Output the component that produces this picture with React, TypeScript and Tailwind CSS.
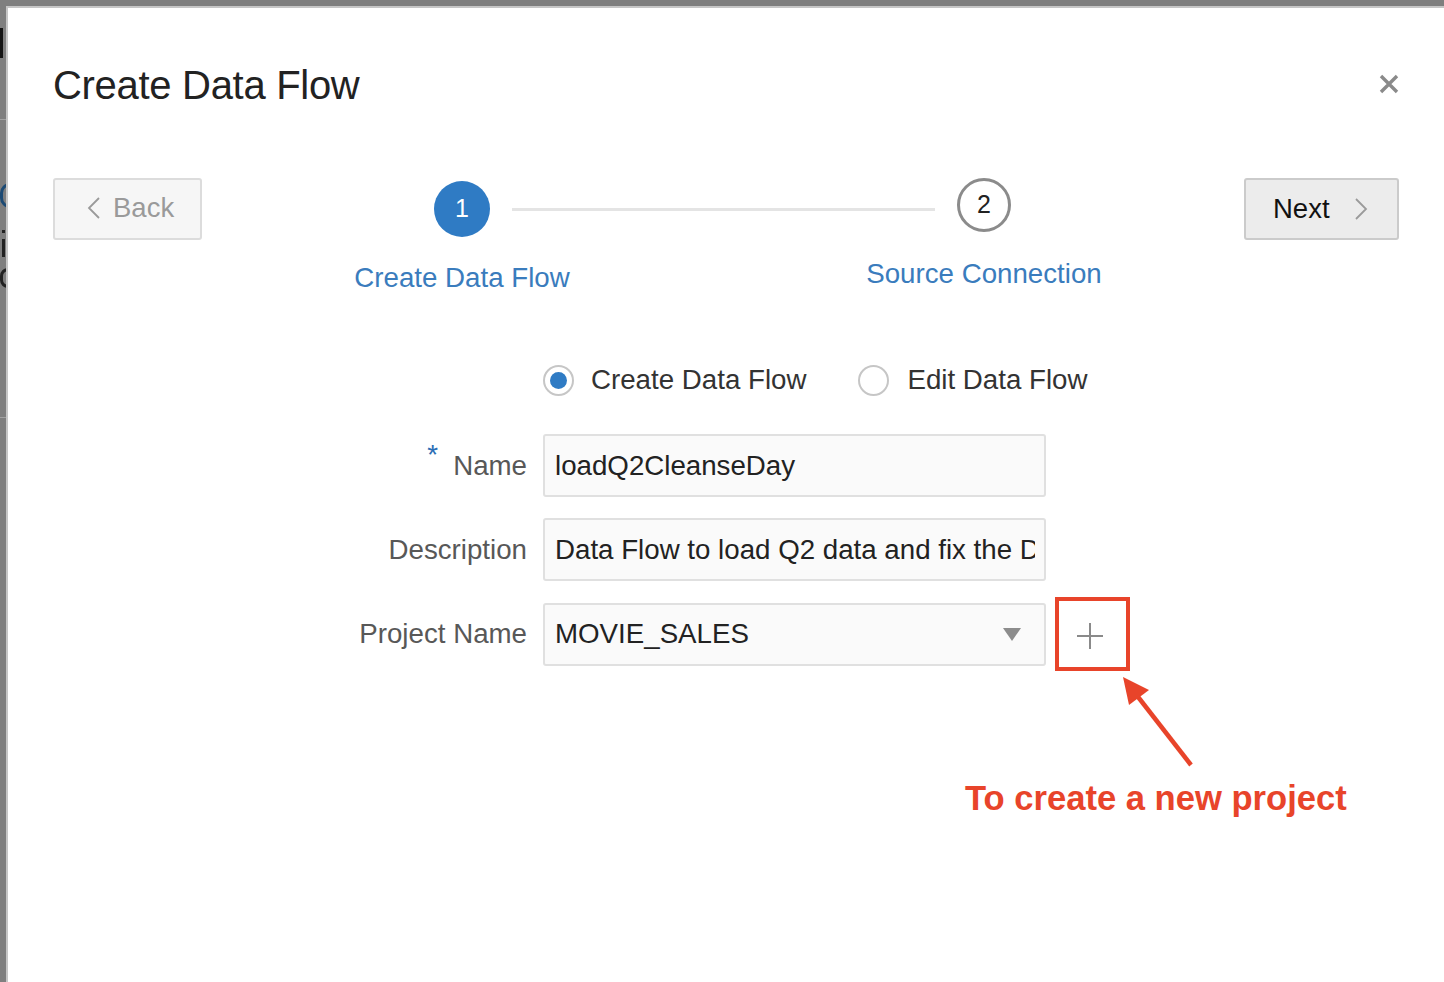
import React from "react";

const FONT = "font-['Liberation_Sans',Arial,Helvetica,sans-serif]";

function ChevronLeft() {
  return (
    <svg width="14" height="22" viewBox="0 0 14 22" fill="none">
      <path d="M12 1 L2 11 L12 21" stroke="#9a9a9a" strokeWidth="1.8" />
    </svg>
  );
}

function ChevronRight() {
  return (
    <svg width="14" height="22" viewBox="0 0 14 22" fill="none">
      <path d="M2 1 L12 11 L2 21" stroke="#9a9a9a" strokeWidth="1.8" />
    </svg>
  );
}

function CloseIcon() {
  return (
    <svg width="20" height="20" viewBox="0 0 20 20" fill="none">
      <path d="M2 2 L18 18 M18 2 L2 18" stroke="#8a8a8a" strokeWidth="3.4" />
    </svg>
  );
}

function Backdrop() {
  // the page behind the dialog, only a sliver of it shows
  return (
    <div className="flex w-[6px] shrink-0 flex-col overflow-hidden">
      <div className="mt-[22px] h-[30px] w-[3px] shrink-0 bg-[#141414]" />
      <div className="mt-[61px] h-px w-full shrink-0 bg-[#a3a3a3]" />
      <div className="mt-[63px] h-[25px] w-[20px] shrink-0 rounded-full border-[3px] border-[#1c4a74]" />
      <div className="mt-[22px] ml-[2px] h-[3px] w-[3px] shrink-0 bg-[#222]" />
      <div className="mt-[6px] ml-[2px] h-[18px] w-[3px] shrink-0 bg-[#222]" />
      <div className="mt-[11px] h-[20px] w-[16px] shrink-0 rounded-full border-[3px] border-[#222]" />
      <div className="mt-[129px] h-px w-full shrink-0 bg-[#a3a3a3]" />
    </div>
  );
}

function FormRow({
  label,
  required,
  children,
  extra,
  className,
}: {
  label: string;
  required?: boolean;
  children: React.ReactNode;
  extra?: React.ReactNode;
  className?: string;
}) {
  return (
    <div className={`flex items-center ${className ?? ""}`}>
      <div className="flex w-[474px] items-center justify-end text-[27.7px] text-[#585858]">
        {required && (
          <span className="mr-[15px] -translate-y-[11px] leading-none text-[#2a6eb5]">*</span>
        )}
        <span>{label}</span>
      </div>
      <div className="ml-[16px] flex h-[63px] w-[503px] items-center rounded-[3px] border-2 border-[#e0e0e0] bg-[#fafafa] pr-[9px] pl-[10px] text-[27.7px] text-[#222]">
        {children}
      </div>
      {extra}
    </div>
  );
}

export default function App() {
  return (
    <div className={`flex h-[982px] w-[1444px] flex-col overflow-hidden bg-[#7f7f7f] ${FONT}`}>
      <div className="h-[6px] shrink-0" />
      <div className="flex flex-1">
        <Backdrop />
        <div className="flex flex-1 flex-col border-t-2 border-l-2 border-[#c6c6c6] bg-white px-[45px] pt-[57px]">
          <div className="flex h-[40px] items-center justify-between">
            <h1 className="text-[40px] leading-[40px] tracking-[-0.3px] text-[#222]">Create Data Flow</h1>
            <div className="mt-[-2px]">
              <CloseIcon />
            </div>
          </div>

          {/* wizard header */}
          <div className="mt-[73px] flex items-start">
            <button className="flex h-[62px] w-[149px] items-center rounded-[3px] border-2 border-[#dcdcdc] bg-[#f6f6f6] pb-[3px] pl-[32px] text-[27.5px] text-[#9a9a9a]">
              <ChevronLeft />
              <span className="ml-[12px]">Back</span>
            </button>

            <div className="ml-[110px] w-[822px]">
              <div className="flex items-start pl-[122px]">
                <div className="mt-[3px] flex h-[56px] w-[56px] items-center justify-center rounded-full bg-[#2f7bc4] text-[25px] text-white">
                  1
                </div>
                <div className="mt-[30px] ml-[22px] h-[3px] w-[423px] bg-[#e4e4e4]" />
                <div className="ml-[22px] flex h-[54px] w-[54px] items-center justify-center rounded-full border-[3px] border-[#8b8b8b] bg-white text-[25px] text-[#222]">
                  2
                </div>
              </div>
              <div className="mt-[21px] flex items-start text-[27.7px] leading-[32px] text-[#3a7cbd]">
                <div className="mt-[4px] w-[300px] text-center">Create Data Flow</div>
                <div className="ml-[222px] w-[300px] text-center">Source Connection</div>
              </div>
            </div>

            <button className="ml-auto flex h-[62px] w-[155px] items-center rounded-[3px] border-2 border-[#cbcbcb] bg-[#ececec] pl-[27px] text-[27.5px] text-[#111]">
              <span>Next</span>
              <span className="ml-[24px]">
                <ChevronRight />
              </span>
            </button>
          </div>

          {/* mode */}
          <div className="mt-[70px] flex h-[32px] items-center pl-[490px] text-[27.7px] text-[#333]">
            <div className="flex h-[31px] w-[31px] items-center justify-center rounded-full border-2 border-[#c6c6c6] bg-white">
              <div className="h-[17px] w-[17px] rounded-full bg-[#2f7bc4]" />
            </div>
            <span className="ml-[17px]">Create Data Flow</span>
            <div className="ml-[52px] h-[31px] w-[31px] rounded-full border-2 border-[#c6c6c6] bg-white" />
            <span className="ml-[18px]">Edit Data Flow</span>
          </div>

          <FormRow label="Name" required className="mt-[38px]">
            <span>loadQ2CleanseDay</span>
          </FormRow>

          <FormRow label="Description" className="mt-[21px]">
            <div className="overflow-hidden whitespace-nowrap">Data Flow to load Q2 data and fix the D</div>
          </FormRow>

          <FormRow
            label="Project Name"
            className="mt-[16px]"
            extra={
              <div className="ml-[9px] flex h-[74px] w-[75px] items-center justify-center border-4 border-[#e8442a] pt-[3px] pr-[6px]">
                <svg width="28" height="28" viewBox="0 0 28 28">
                  <path d="M14 1 V27 M1 14 H27" stroke="#8a8a8a" strokeWidth="2" />
                </svg>
              </div>
            }
          >
            <span className="flex-1">MOVIE_SALES</span>
            <svg width="18" height="13" viewBox="0 0 18 13" className="mr-[14px]">
              <path d="M0 0 H18 L9 13 Z" fill="#8c8c8c" />
            </svg>
          </FormRow>

          {/* annotation */}
          <svg width="80" height="98" viewBox="0 0 80 98" className="mt-[1px] ml-[1065px]">
            <line x1="17" y1="21" x2="73" y2="93" stroke="#e8442a" strokeWidth="4.5" />
            <path d="M5 5 L11 33 L31 18 Z" fill="#e8442a" />
          </svg>
          <p className="mt-[8px] ml-[912px] text-[34.6px] leading-[40px] font-bold whitespace-nowrap text-[#e8442a]">
            To create a new project
          </p>
        </div>
      </div>
    </div>
  );
}
